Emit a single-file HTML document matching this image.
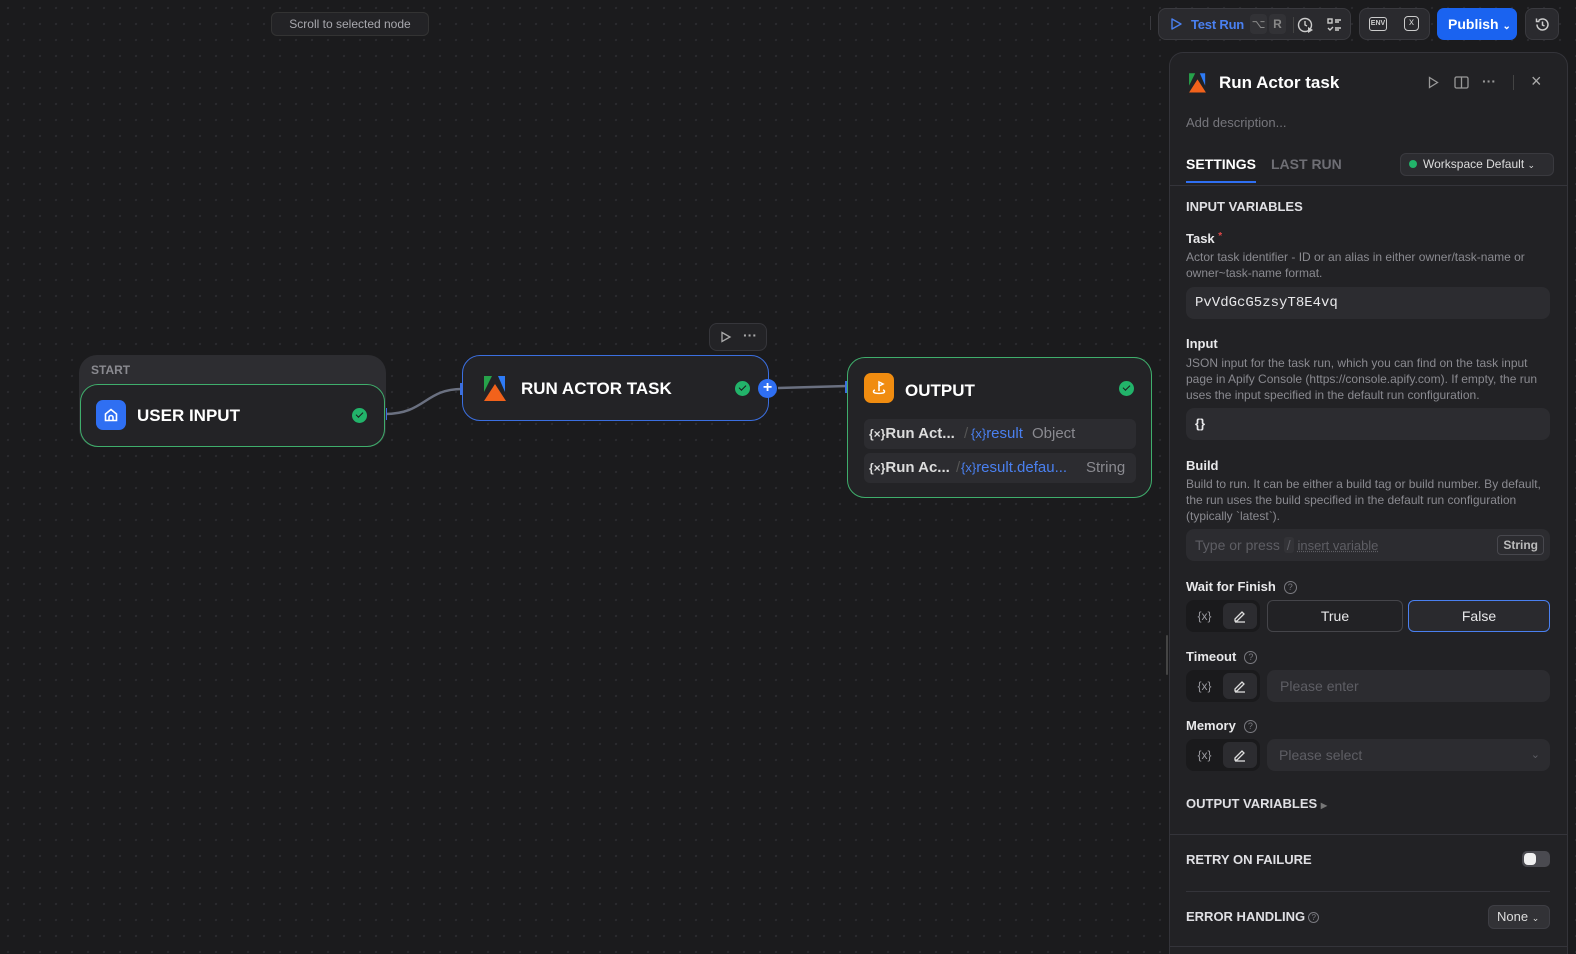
<!DOCTYPE html>
<html style="overflow:hidden;width:1576px;height:954px"><head><meta charset="utf-8"><style>
*{box-sizing:border-box;margin:0;padding:0}
body{width:1576px;height:954px;overflow:hidden;background:#1b1b1d;font-family:"Liberation Sans",sans-serif;color:#e8e8ea;position:relative;
background-image:radial-gradient(circle,#2a2a2e 1px,transparent 1.3px);background-size:16px 16px}
.a{position:absolute}
.btn{position:absolute;background:#2a2a2e;border:1px solid #3a3a3f;border-radius:8px}
.node{position:absolute;background:#232326;border-radius:18px}
.chk{position:absolute;width:15px;height:15px;border-radius:50%;background:#22b36a}
.chk:after{content:"";position:absolute;left:4px;top:4px;width:6px;height:3px;border-left:1.6px solid #1b1b1d;border-bottom:1.6px solid #1b1b1d;transform:rotate(-45deg)}
.lbl{font-size:13px;font-weight:bold;color:#e8e8ea}
.desc{font-size:12px;color:#8a8a90;line-height:16px}
.inp{position:absolute;left:1186px;width:364px;background:#2c2c30;border-radius:8px}
.q{display:inline-block;width:13px;height:13px;border:1px solid #7a7a80;border-radius:50%;font-size:9px;text-align:center;line-height:11px;color:#7a7a80;vertical-align:middle;margin-left:8px;font-weight:normal}
.xe{position:absolute;left:1186px;width:74px;height:32px;background:#1a1a1c;border-radius:8px}
.xe span{position:absolute;left:0;top:0;width:37px;height:32px;text-align:center;line-height:32px;font-size:12px;color:#9a9aa0}
.xe i{position:absolute;right:3px;top:3px;width:34px;height:26px;background:#2c2c30;border-radius:6px}
.sec{font-size:13px;font-weight:bold;color:#e0e0e4}
</style></head><body>

<div class="btn" style="left:271px;top:12px;width:158px;height:24px;background:#232326;border-color:#333;font-size:12px;color:#a8a8ae;text-align:center;line-height:22px;border-radius:6px">Scroll to selected node</div>

<!-- top bar -->
<div class="a" style="left:1150px;top:16px;width:1px;height:14px;background:#3a3a3f"></div>
<div class="btn" style="left:1158px;top:8px;width:193px;height:32px">
 <svg class="a" style="left:10px;top:8px" width="14" height="14" viewBox="0 0 14 14"><path d="M3 2l9 5-9 5z" fill="none" stroke="#4a80f0" stroke-width="1.4" stroke-linejoin="round"/></svg>
 <span class="a" style="left:32px;top:8px;font-size:13px;font-weight:bold;color:#4a80f0;letter-spacing:-0.2px">Test Run</span>
 <span class="a" style="left:91px;top:5px;width:17px;height:20px;background:#323236;border-radius:4px;font-size:12px;color:#888;text-align:center;line-height:20px">⌥</span>
 <span class="a" style="left:110px;top:5px;width:17px;height:20px;background:#323236;border-radius:4px;font-size:12px;color:#888;text-align:center;line-height:20px;font-weight:bold">R</span>
 <div class="a" style="left:134px;top:8px;width:1px;height:16px;background:#444"></div>
 <svg class="a" style="left:138px;top:7px" width="18" height="18" viewBox="0 0 18 18"><circle cx="8" cy="9" r="6.5" fill="none" stroke="#ccc" stroke-width="1.4"/><path d="M8 5v4l2 1" stroke="#ccc" stroke-width="1.4" fill="none"/><path d="M11 11l5 3-5 3z" fill="#ccc"/></svg>
 <svg class="a" style="left:167px;top:8px" width="16" height="16" viewBox="0 0 16 16" stroke="#ccc" stroke-width="1.4" fill="none"><rect x="2" y="2" width="4" height="4"/><path d="M9 3h6M9 5h4M2 11l2 2 3-3M9 11h6M9 13h4"/></svg>
</div>
<div class="btn" style="left:1359px;top:8px;width:71px;height:32px">
 <span class="a" style="left:9px;top:8px;width:18px;height:14px;border:1.4px solid #ccc;border-radius:3px;font-size:7px;font-weight:bold;color:#ccc;text-align:center;line-height:11px">ENV</span>
 <span class="a" style="left:44px;top:7px;width:15px;height:15px;border:1.4px solid #ccc;border-radius:4px;font-size:10px;color:#ccc;text-align:center;line-height:12px">x</span>
</div>
<div class="a" style="left:1437px;top:8px;width:80px;height:32px;background:#1a63f0;border-radius:7px;font-size:14px;font-weight:bold;color:#fff;line-height:32px;padding-left:11px">Publish <span style="font-size:10px">⌄</span></div>
<div class="btn" style="left:1525px;top:8px;width:34px;height:32px">
 <svg class="a" style="left:8px;top:7px" width="17" height="17" viewBox="0 0 17 17" fill="none" stroke="#ccc" stroke-width="1.5"><path d="M3 8.5a5.5 5.5 0 1 0 1.6-3.9M2.5 2.5v3h3"/><path d="M8.5 5.5v3.5l2 1"/></svg>
</div>

<!-- edges -->
<svg class="a" style="left:0;top:0" width="1160" height="500">
 <path d="M385 414 C425 414,425 389,462 389" stroke="#6a7080" stroke-width="2.5" fill="none"/>
 <path d="M778 388 L847 386" stroke="#6a7080" stroke-width="2.5" fill="none"/>
 <rect x="383" y="408" width="4" height="12" fill="#3b6fe0"/>
 <rect x="460" y="383" width="4" height="12" fill="#3b6fe0"/>
 <rect x="845" y="381" width="4" height="12" fill="#3b6fe0"/>
</svg>

<!-- start group -->
<div class="a" style="left:79px;top:355px;width:307px;height:92px;background:#2d2d31;border-radius:18px"></div>
<div class="a" style="left:91px;top:363px;font-size:12px;font-weight:bold;color:#8a8a90">START</div>
<div class="node" style="left:80px;top:384px;width:305px;height:63px;border:1.5px solid #3fae6c">
 <div class="a" style="left:15px;top:15px;width:30px;height:30px;background:#2f6ff2;border-radius:7px"><svg class="a" style="left:7px;top:7px" width="16" height="16" viewBox="0 0 16 16" fill="none" stroke="#fff" stroke-width="1.6"><path d="M2.5 7L8 2.5 13.5 7v6.5h-11z"/><path d="M6 13.5v-3a2 2 0 0 1 4 0v3"/></svg></div>
 <div class="a" style="left:56px;top:21px;font-size:17px;font-weight:bold;color:#fff">USER INPUT</div>
 <div class="chk" style="left:271px;top:23px"></div>
</div>

<!-- run actor node -->
<div class="a" style="left:709px;top:323px;width:58px;height:28px;background:#232326;border:1px solid #36363b;border-radius:8px">
 <svg class="a" style="left:10px;top:7px" width="12" height="12" viewBox="0 0 12 12"><path d="M2 1.5l8 4.5-8 4.5z" fill="none" stroke="#aaa" stroke-width="1.3"/></svg>
 <span class="a" style="left:33px;top:3px;color:#aaa;font-size:14px;font-weight:bold">···</span>
</div>
<div class="node" style="left:462px;top:355px;width:307px;height:66px;border:1.5px solid #3b6fe0">
 <svg class="a" style="left:17px;top:17px" width="30" height="30" viewBox="0 0 30 30"><path d="M4 3h8L4 19z" fill="#26a24a"/><path d="M18 3h7v16z" fill="#2e7bf6"/><path d="M15 11l11 17H4z" fill="#f2621b"/></svg>
 <div class="a" style="left:58px;top:23px;font-size:17px;font-weight:bold;color:#fff">RUN ACTOR TASK</div>
 <div class="chk" style="left:272px;top:25px"></div>
 <div class="a" style="left:295px;top:23px;width:19px;height:19px;border-radius:50%;background:#2f6ff2;color:#fff;font-size:16px;font-weight:bold;text-align:center;line-height:18px">+</div>
</div>

<!-- output node -->
<div class="node" style="left:847px;top:357px;width:305px;height:141px;border:1.5px solid #3fae6c">
 <div class="a" style="left:16px;top:15px;width:30px;height:30px;background:#f08c10;border-radius:7px"><svg class="a" style="left:6px;top:6px" width="18" height="18" viewBox="0 0 18 18" fill="none" stroke="#fff" stroke-width="1.5"><path d="M9 12V3l4 2-4 2"/><path d="M5 11c-2 .5-2 2.5 0 3s6 .5 8 0 2-2.5 0-3"/></svg></div>
 <div class="a" style="left:57px;top:23px;font-size:17px;font-weight:bold;color:#fff">OUTPUT</div>
 <div class="chk" style="left:271px;top:23px"></div>
 <div class="a" style="left:16px;top:61px;width:272px;height:30px;background:#2c2c30;border-radius:6px;font-size:15px;line-height:30px;white-space:nowrap">
  <span style="position:absolute;left:5px;color:#ddd;font-weight:bold"><span style="font-size:12px">{×}</span>Run Act...</span>
  <span style="position:absolute;left:100px;color:#555">/</span><span style="position:absolute;left:107px;color:#4a80f0"><span style="font-size:13px">{x}</span>result</span>
  <span style="position:absolute;left:168px;color:#8a8a90">Object</span></div>
 <div class="a" style="left:16px;top:95px;width:272px;height:30px;background:#2c2c30;border-radius:6px;font-size:15px;line-height:30px;white-space:nowrap">
  <span style="position:absolute;left:5px;color:#ddd;font-weight:bold"><span style="font-size:12px">{×}</span>Run Ac...</span>
  <span style="position:absolute;left:92px;color:#555">/</span><span style="position:absolute;left:97px;color:#4a80f0"><span style="font-size:13px">{x}</span>result.defau...</span>
  <span style="position:absolute;left:222px;color:#8a8a90">String</span></div>
</div>

<div class="a" style="left:1166px;top:635px;width:2px;height:40px;background:#444;border-radius:1px"></div>

<!-- panel -->
<div class="a" style="left:1169px;top:52px;width:399px;height:902px;background:#222225;border:1px solid #34343a;border-bottom:none;border-radius:14px 14px 0 0"></div>
<svg class="a" style="left:1186px;top:71px" width="23" height="23" viewBox="0 0 30 30"><path d="M4 3h8L4 19z" fill="#26a24a"/><path d="M18 3h7v16z" fill="#2e7bf6"/><path d="M15 11l11 17H4z" fill="#f2621b"/></svg>
<div class="a" style="left:1219px;top:73px;font-size:17px;font-weight:bold;color:#fff">Run Actor task</div>
<svg class="a" style="left:1427px;top:76px" width="13" height="13" viewBox="0 0 13 13"><path d="M2.5 1.5l8 5-8 5z" fill="none" stroke="#999" stroke-width="1.3"/></svg>
<svg class="a" style="left:1454px;top:75px" width="15" height="15" viewBox="0 0 15 15" fill="none" stroke="#999" stroke-width="1.3"><rect x="1" y="2" width="13" height="11" rx="1.5"/><path d="M7.5 2v11"/></svg>
<div class="a" style="left:1482px;top:73px;color:#999;font-size:14px;font-weight:bold">···</div>
<div class="a" style="left:1513px;top:75px;width:1px;height:15px;background:#444"></div>
<div class="a" style="left:1531px;top:71px;color:#aaa;font-size:18px">×</div>
<div class="a" style="left:1186px;top:115px;font-size:13px;color:#76767c">Add description...</div>

<div class="a" style="left:1186px;top:156px;font-size:14px;font-weight:bold;color:#fff">SETTINGS</div>
<div class="a" style="left:1186px;top:181px;width:70px;height:2px;background:#2f6ff2"></div>
<div class="a" style="left:1271px;top:156px;font-size:14px;font-weight:bold;color:#6e6e74">LAST RUN</div>
<div class="a" style="left:1400px;top:153px;width:154px;height:23px;background:#2c2c30;border:1px solid #3a3a3f;border-radius:6px;font-size:12px;color:#ddd;line-height:21px;padding-left:22px">Workspace Default <span style="font-size:9px">⌄</span></div>
<div class="a" style="left:1409px;top:160px;width:8px;height:8px;border-radius:50%;background:#22b36a"></div>
<div class="a" style="left:1170px;top:185px;width:397px;height:1px;background:#34343a"></div>

<div class="a sec" style="left:1186px;top:199px">INPUT VARIABLES</div>
<div class="a lbl" style="left:1186px;top:231px">Task <span style="color:#e04848;font-size:10px;vertical-align:top">*</span></div>
<div class="a desc" style="left:1186px;top:249px;width:366px">Actor task identifier - ID or an alias in either owner/task-name or owner~task-name format.</div>
<div class="inp" style="top:287px;height:32px;font-family:'Liberation Mono',monospace;font-size:14px;line-height:32px;padding-left:9px;color:#e8e8ea">PvVdGcG5zsyT8E4vq</div>

<div class="a lbl" style="left:1186px;top:336px">Input</div>
<div class="a desc" style="left:1186px;top:355px;width:370px">JSON input for the task run, which you can find on the task input page in Apify Console (https://console.apify.com). If empty, the run uses the input specified in the default run configuration.</div>
<div class="inp" style="top:408px;height:32px;font-size:13px;line-height:32px;padding-left:9px;font-weight:bold">{}</div>

<div class="a lbl" style="left:1186px;top:458px">Build</div>
<div class="a desc" style="left:1186px;top:476px;width:366px">Build to run. It can be either a build tag or build number. By default, the run uses the build specified in the default run configuration (typically `latest`).</div>
<div class="inp" style="top:529px;height:32px;font-size:14px;line-height:32px;padding-left:9px;color:#5e5e64">Type or press <span style="background:#333337;padding:0 3px;border-radius:3px">/</span> <span style="font-size:13px;text-decoration:underline dotted">insert variable</span>
 <span class="a" style="right:6px;top:6px;height:20px;border:1px solid #48484e;border-radius:4px;font-size:12px;color:#bbb;line-height:18px;padding:0 5px;font-weight:bold">String</span></div>

<div class="a lbl" style="left:1186px;top:579px">Wait for Finish<span class="q">?</span></div>
<div class="xe" style="top:600px"><span>{x}</span><i><svg class="a" style="left:10px;top:6px" width="14" height="14" viewBox="0 0 14 14" fill="none" stroke="#ddd" stroke-width="1.3"><path d="M2 10l7-7 2 2-7 7H2z"/><path d="M2 13h10"/></svg></i></div>
<div class="a" style="left:1267px;top:600px;width:136px;height:32px;border:1px solid #45454a;border-radius:6px;background:#222225;font-size:14px;text-align:center;line-height:30px">True</div>
<div class="a" style="left:1408px;top:600px;width:142px;height:32px;border:1px solid #4a80f0;border-radius:6px;background:#2a2a2e;font-size:14px;text-align:center;line-height:30px">False</div>

<div class="a lbl" style="left:1186px;top:649px">Timeout<span class="q">?</span></div>
<div class="xe" style="top:670px"><span>{x}</span><i><svg class="a" style="left:10px;top:6px" width="14" height="14" viewBox="0 0 14 14" fill="none" stroke="#ddd" stroke-width="1.3"><path d="M2 10l7-7 2 2-7 7H2z"/><path d="M2 13h10"/></svg></i></div>
<div class="a" style="left:1267px;top:670px;width:283px;height:32px;background:#2c2c30;border-radius:8px;font-size:14px;color:#5e5e64;line-height:32px;padding-left:13px">Please enter</div>

<div class="a lbl" style="left:1186px;top:718px">Memory<span class="q">?</span></div>
<div class="xe" style="top:739px"><span>{x}</span><i><svg class="a" style="left:10px;top:6px" width="14" height="14" viewBox="0 0 14 14" fill="none" stroke="#ddd" stroke-width="1.3"><path d="M2 10l7-7 2 2-7 7H2z"/><path d="M2 13h10"/></svg></i></div>
<div class="a" style="left:1267px;top:739px;width:283px;height:32px;background:#2c2c30;border-radius:8px;font-size:14px;color:#5e5e64;line-height:32px;padding-left:12px">Please select<span class="a" style="right:10px;top:0;font-size:11px">⌄</span></div>

<div class="a sec" style="left:1186px;top:796px">OUTPUT VARIABLES <span style="font-size:8px;color:#777">▶</span></div>
<div class="a" style="left:1170px;top:834px;width:397px;height:1px;background:#34343a"></div>
<div class="a sec" style="left:1186px;top:852px">RETRY ON FAILURE</div>
<div class="a" style="left:1522px;top:851px;width:28px;height:16px;background:#4a4a50;border-radius:5px"><div class="a" style="left:2px;top:2px;width:12px;height:12px;background:#f0f0f0;border-radius:4px"></div></div>
<div class="a" style="left:1186px;top:891px;width:364px;height:1px;background:#34343a"></div>
<div class="a sec" style="left:1186px;top:909px">ERROR HANDLING<span class="q" style="margin-left:3px;width:11px;height:11px;line-height:9px;font-size:8px">?</span></div>
<div class="a" style="left:1488px;top:905px;width:62px;height:24px;background:#323236;border:1px solid #3e3e44;border-radius:6px;font-size:13px;color:#ddd;line-height:22px;padding-left:8px">None <span style="font-size:9px">⌄</span></div>
<div class="a" style="left:1170px;top:946px;width:397px;height:1px;background:#34343a"></div>
</body></html>
